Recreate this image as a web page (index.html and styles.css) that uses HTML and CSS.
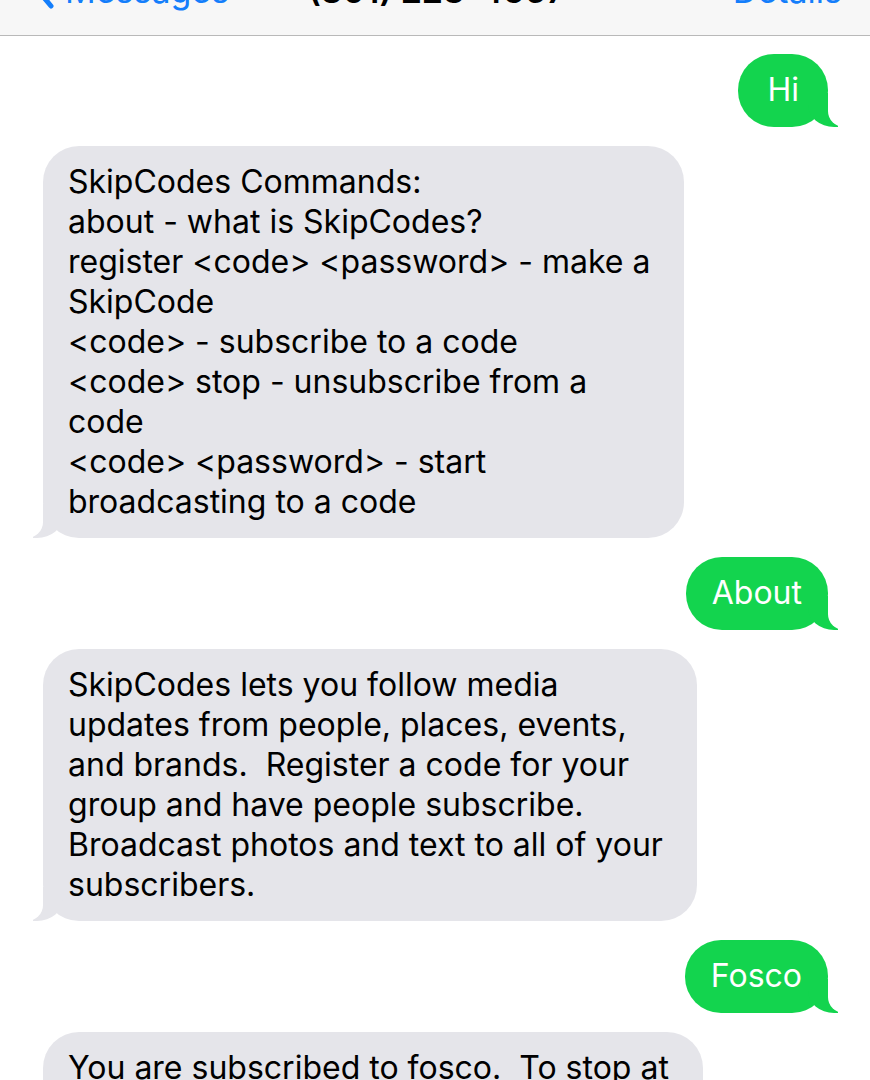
FILE: index.html
```html
<!DOCTYPE html>
<html lang="en">
<head>
<meta charset="utf-8">
<title>Messages</title>
<link rel="stylesheet" href="styles.css">
</head>
<body>
<header class="nav">
  <div class="nav-left">
    <svg class="chev" width="24" height="44" viewBox="0 0 24 44" aria-hidden="true">
      <polyline points="19,4 4,22 19,40" fill="none" stroke="#147efb" stroke-width="5" stroke-linecap="round" stroke-linejoin="round"/>
    </svg>
    <span class="nav-link">Messages</span>
  </div>
  <div class="nav-title">(801) 223-4567</div>
  <div class="nav-right"><span class="nav-link">Details</span></div>
</header>
<main class="thread">
  <div class="bubble sent short">Hi</div>
  <div class="bubble recv">SkipCodes Commands:<br>about - what is SkipCodes?<br>register &lt;code&gt; &lt;password&gt; - make a<br>SkipCode<br>&lt;code&gt; - subscribe to a code<br>&lt;code&gt; stop - unsubscribe from a<br>code<br>&lt;code&gt; &lt;password&gt; - start<br>broadcasting to a code</div>
  <div class="bubble sent">About</div>
  <div class="bubble recv">SkipCodes lets you follow media<br>updates from people, places, events,<br>and brands.&nbsp; Register a code for your<br>group and have people subscribe.<br>Broadcast photos and text to all of your<br>subscribers.</div>
  <div class="bubble sent">Fosco</div>
  <div class="bubble recv">You are subscribed to fosco.&nbsp; To stop at<br>any time, text "fosco stop".</div>
</main>
</body>
</html>
```
FILE: styles.css
```css
html, body {
  margin: 0;
  padding: 0;
  background: #ffffff;
}
body {
  width: 870px;
  height: 1080px;
  overflow: hidden;
  font-family: "Inter", "Liberation Sans", sans-serif;
  -webkit-font-smoothing: antialiased;
}
.nav {
  height: 35px;
  border-bottom: 1px solid #b9b9b9;
  background: #f7f7f7;
  display: grid;
  grid-template-columns: 1fr auto 1fr;
  align-items: start;
  overflow: hidden;
  padding: 0 28px 0 32px;
  font-size: 34px;
  line-height: 40px;
}
.nav-left {
  display: flex;
  align-items: flex-start;
  gap: 9px;
  margin-top: -29px;
}
.chev {
  margin-top: -5px;
}
.nav-link {
  color: #147efb;
}
.nav-title {
  color: #000;
  font-weight: 600;
  margin-top: -29px;
}
.nav-right {
  display: flex;
  justify-content: flex-end;
  margin-top: -29px;
}
.thread {
  display: flex;
  flex-direction: column;
  gap: 19px;
  padding-top: 18px;
}
.bubble {
  position: relative;
  font-size: 32px;
  line-height: 40px;
  border-radius: 36px;
  white-space: nowrap;
}
.sent {
  align-self: flex-end;
  margin-right: 42px;
  background: #13d44e;
  color: #ffffff;
  padding: 16px 26px 17px;
}
.sent.short {
  padding-left: 29px;
  padding-right: 29px;
}
.recv {
  align-self: flex-start;
  margin-left: 43px;
  background: #e5e5ea;
  color: #000000;
  padding: 16px 34px 16px 25px;
}
.bubble::before,
.bubble::after {
  content: "";
  position: absolute;
  bottom: 0;
  height: 34px;
}
.sent::before {
  right: -10px;
  width: 30px;
  background: #13d44e;
  border-bottom-left-radius: 26px 22px;
}
.sent::after {
  right: -36px;
  width: 36px;
  background: #ffffff;
  border-bottom-left-radius: 16px;
}
.recv::before {
  left: -10px;
  width: 30px;
  background: #e5e5ea;
  border-bottom-right-radius: 26px 22px;
}
.recv::after {
  left: -36px;
  width: 36px;
  background: #ffffff;
  border-bottom-right-radius: 16px;
}
```
